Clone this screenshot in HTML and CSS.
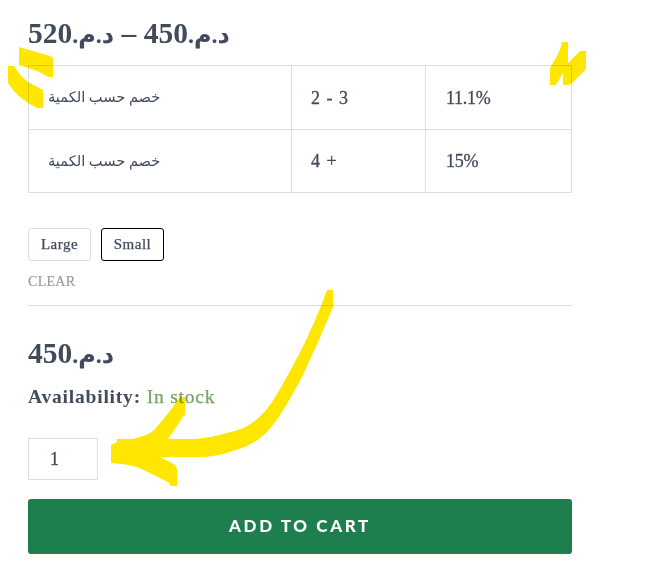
FILE: index.html
```html
<!DOCTYPE html>
<html lang="en">
<head>
<meta charset="utf-8">
<title>Product options</title>
<link rel="stylesheet" href="styles.css">
</head>
<body>
<main class="product">
  <p class="price price-range"><span class="ar">د.م.</span>450 <span class="dash">–</span> <span class="ar">د.م.</span>520</p>
  <table class="discounts">
    <colgroup><col class="col-name"><col class="col-qty"><col class="col-rate"></colgroup>
    <tr><td class="name"><span>خصم حسب الكمية</span></td><td>2 - 3</td><td class="rate">11.1%</td></tr>
    <tr><td class="name"><span>خصم حسب الكمية</span></td><td>4 +</td><td class="rate">15%</td></tr>
  </table>
  <div class="sizes">
    <button class="size">Large</button>
    <button class="size selected">Small</button>
  </div>
  <a class="clear">CLEAR</a>
  <section class="purchase">
    <p class="price"><span class="ar">د.م.</span>450</p>
    <p class="availability"><strong>Availability:</strong> <span class="stock">In stock</span></p>
    <div class="quantity">1</div>
    <button class="cart">ADD TO CART</button>
  </section>
</main>
<svg class="marker" width="649" height="567" viewBox="0 0 649 567" aria-hidden="true">
  <path d="M19 47L33 51L50 56L53 58V77H48Q42 73 37 71L19 65Z"/>
  <path d="M8 66H14Q21 77 28 82L43 90V108H37Q27 103 20 97Q13 91 8 83Z"/>
  <path d="M562 42H568V62L566 65L580 51H586V69L571 84L568 85H563V73L556 85H550V68L557 56Q560 51 562 42Z"/>
  <path d="M327 290H333V307L318 342L303 375C295 390 288 403 280 415C274 424 268 432 260 438C253 444 243 448 233 451C221 455 210 457 200 457H160L172 463Q177 466 177 469V486H171Q170 483 166 481L150 473Q142 469 137 467Q127 464 111 463V445L117 442V439H133L146 435Q151 433 154 430Q166 417 180 397H185V415Q182 417 179 423L168 439H195C206 438 217 436 227 433C236 431 245 428 252 423C259 418 265 412 270 405C277 395 284 382 290 371C302 350 312 328 321 306Z"/>
</svg>
</body>
</html>
```
FILE: styles.css
```css
* { box-sizing: border-box; }
body {
  margin: 0;
  background: #fff;
  color: #414b5c;
  font-family: "Liberation Serif", "DejaVu Sans", serif;
  position: relative;
  height: 567px;
  overflow: hidden;
}
p { margin: 0; }
button { font-family: inherit; margin: 0; }
.product { width: 544px; margin-left: 28px; padding-top: 17px; }
.price {
  height: 48px;
  font-size: 29.5px;
  line-height: 32px;
  font-weight: 700;
  white-space: nowrap;
}
.ar { font-size: 24px; letter-spacing: 0; }
.discounts {
  width: 544px;
  border-collapse: collapse;
  table-layout: fixed;
}
.col-name { width: 263px; }
.col-qty { width: 134px; }
.discounts td {
  height: 63.5px;
  padding: 2px 19px 0;
  border: 1px solid #dedede;
  font-size: 18px;
  letter-spacing: 1px;
  -webkit-text-stroke: .3px;
}
.discounts .name { font-size: 14.6px; letter-spacing: 0; padding-top: 0; -webkit-text-stroke: 0; }
.discounts .rate { padding-left: 20px; letter-spacing: -.3px; }
.sizes { display: flex; gap: 10px; margin-top: 35px; }
.size {
  width: 63px;
  height: 33px;
  padding: 0;
  border: 1px solid #dedede;
  border-radius: 3px;
  background: #fff;
  color: #414b5c;
  font-size: 15px;
  letter-spacing: .5px;
  -webkit-text-stroke: .25px;
}
.size.selected { border-color: #000; }
.clear {
  display: block;
  margin-top: 11px;
  height: 33px;
  color: #969ba5;
  font-size: 14px;
  line-height: 19px;
  letter-spacing: .3px;
  -webkit-text-stroke: .2px;
}
.purchase { border-top: 1px solid #dedede; padding-top: 31px; }
.availability {
  height: 53px;
  font-size: 19.5px;
  line-height: 24px;
  letter-spacing: .8px;
}
.stock { color: #76a566; -webkit-text-stroke: .25px; }
.quantity {
  width: 70px;
  height: 42px;
  padding-left: 21px;
  border: 1px solid #dedede;
  font-size: 18px;
  line-height: 41px;
  -webkit-text-stroke: .3px;
}
.cart {
  display: block;
  width: 544px;
  height: 55px;
  margin-top: 19px;
  padding: 0 0 2px;
  border: 0;
  border-radius: 3px;
  background: #1e7f4e;
  color: #fff;
  font: 900 17px Lato, sans-serif;
  letter-spacing: 2.6px;
}
.marker {
  position: absolute;
  inset: 0;
  fill: #ffe600;
  mix-blend-mode: multiply;
  pointer-events: none;
}
```
